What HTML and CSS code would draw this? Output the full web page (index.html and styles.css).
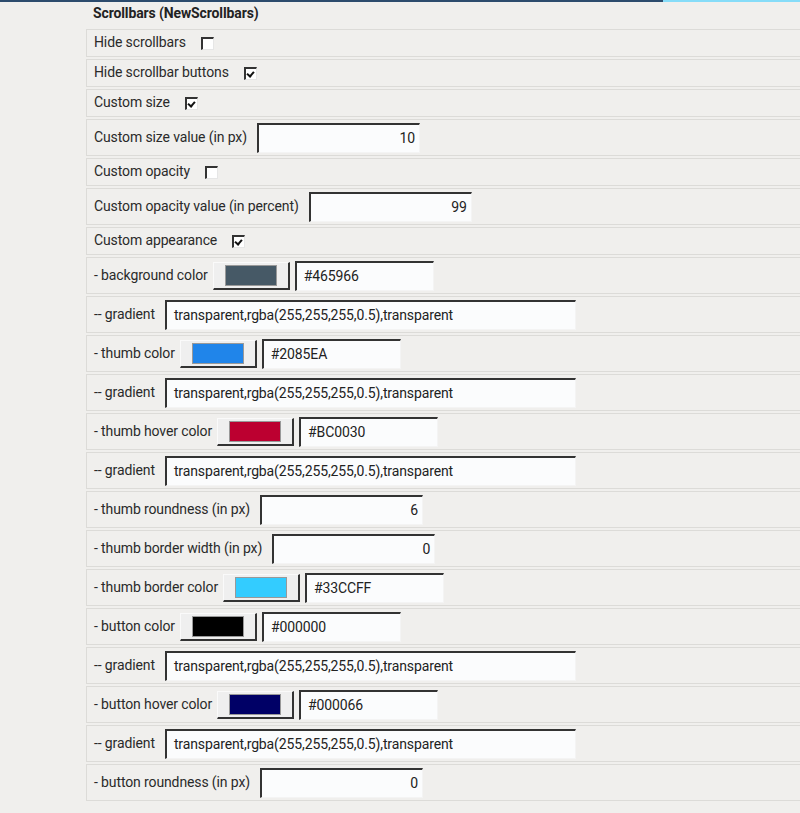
FILE: index.html
```html
<!DOCTYPE html>
<html>
<head>
<meta charset="utf-8">
<link rel="stylesheet" href="styles.css">
</head>
<body>
<div class="topbar"><div class="tb-dark"></div><div class="tb-light"></div></div>
<div class="panel">
  <div class="title">Scrollbars (NewScrollbars)</div>

  <div class="row short"><span class="lbl">Hide scrollbars</span><span class="cb"></span></div>
  <div class="row short"><span class="lbl">Hide scrollbar buttons</span><span class="cb on"></span></div>
  <div class="row short"><span class="lbl">Custom size</span><span class="cb on"></span></div>
  <div class="row"><span class="lbl">Custom size value (in px)</span><span class="inp num w163">10</span></div>
  <div class="row short"><span class="lbl">Custom opacity</span><span class="cb"></span></div>
  <div class="row"><span class="lbl">Custom opacity value (in percent)</span><span class="inp num w163">99</span></div>
  <div class="row short"><span class="lbl">Custom appearance</span><span class="cb on"></span></div>

  <div class="row"><span class="lbl">- background color</span><span class="cbtn"><span class="sw" style="background:#465966"></span></span><span class="inp w139">#465966</span></div>
  <div class="row"><span class="lbl">-- gradient</span><span class="inp grad">transparent,rgba(255,255,255,0.5),transparent</span></div>
  <div class="row"><span class="lbl">- thumb color</span><span class="cbtn"><span class="sw" style="background:#2085EA"></span></span><span class="inp w139">#2085EA</span></div>
  <div class="row"><span class="lbl">-- gradient</span><span class="inp grad">transparent,rgba(255,255,255,0.5),transparent</span></div>
  <div class="row"><span class="lbl">- thumb hover color</span><span class="cbtn"><span class="sw" style="background:#BC0030"></span></span><span class="inp w139">#BC0030</span></div>
  <div class="row"><span class="lbl">-- gradient</span><span class="inp grad">transparent,rgba(255,255,255,0.5),transparent</span></div>
  <div class="row"><span class="lbl">- thumb roundness (in px)</span><span class="inp num w163">6</span></div>
  <div class="row"><span class="lbl">- thumb border width (in px)</span><span class="inp num w163">0</span></div>
  <div class="row"><span class="lbl">- thumb border color</span><span class="cbtn"><span class="sw" style="background:#33CCFF"></span></span><span class="inp w139">#33CCFF</span></div>
  <div class="row"><span class="lbl">- button color</span><span class="cbtn"><span class="sw" style="background:#000000"></span></span><span class="inp w139">#000000</span></div>
  <div class="row"><span class="lbl">-- gradient</span><span class="inp grad">transparent,rgba(255,255,255,0.5),transparent</span></div>
  <div class="row"><span class="lbl">- button hover color</span><span class="cbtn"><span class="sw" style="background:#000066"></span></span><span class="inp w139">#000066</span></div>
  <div class="row"><span class="lbl">-- gradient</span><span class="inp grad">transparent,rgba(255,255,255,0.5),transparent</span></div>
  <div class="row"><span class="lbl">- button roundness (in px)</span><span class="inp num w163">0</span></div>
</div>
</body>
</html>
```
FILE: styles.css
```css
html, body {
  margin: 0;
  padding: 0;
  background: #f0efed;
  overflow: hidden;
}
body {
  font-family: Roboto, "Liberation Sans", sans-serif;
  font-size: 14px;
  letter-spacing: -0.12px;
  color: #2a2a2a;
  width: 800px;
  height: 813px;
}
.topbar {
  display: flex;
  height: 2px;
}
.tb-dark {
  width: 663px;
  background: #2c4b6d;
}
.tb-light {
  flex: 1;
  background: #86dcf8;
}
.panel {
  margin-left: 86px;
  width: 760px;
}
.title {
  font-weight: bold;
  height: 27px;
  line-height: 23px;
  padding-left: 7px;
  color: #222;
}
.row {
  display: flex;
  align-items: center;
  box-sizing: border-box;
  height: 37px;
  border: 1px solid #dcdbd8;
  padding-left: 7px;
  margin-bottom: 2px;
}
.row.short {
  height: 28px;
}
.lbl {
  margin-right: 10px;
  padding-bottom: 2px;
  white-space: nowrap;
}
.cb {
  box-sizing: border-box;
  width: 13px;
  height: 13px;
  margin-left: 5px;
  background: #fff;
  border-top: 2px solid #333;
  border-left: 2px solid #333;
  border-right: 1px solid #e6e6e6;
  border-bottom: 1px solid #e6e6e6;
  position: relative;
}
.cb.on::after {
  content: "";
  position: absolute;
  left: 2px;
  top: 1px;
  width: 3px;
  height: 5px;
  border-right: 2px solid #111;
  border-bottom: 2px solid #111;
  transform: rotate(40deg);
}
.inp {
  box-sizing: border-box;
  height: 30px;
  line-height: 26px;
  background: #fbfcfd;
  border-top: 2px solid #333;
  border-left: 2px solid #333;
  border-right: 1px solid #f4f4f4;
  border-bottom: 1px solid #f4f4f4;
  padding: 0 7px;
  color: #222;
  white-space: nowrap;
}
.num {
  text-align: right;
  padding-right: 4px;
}
.w163 { width: 163px; }
.w139 { width: 139px; }
.grad { width: 411px; }
.cbtn {
  box-sizing: border-box;
  width: 77px;
  height: 28px;
  margin-left: -5px;
  margin-right: 5px;
  background: #efefef;
  border-top: 1px solid #fafafa;
  border-left: 1px solid #fafafa;
  border-right: 2px solid #333;
  border-bottom: 2px solid #333;
  display: flex;
  align-items: center;
  justify-content: center;
}
.sw {
  display: block;
  box-sizing: border-box;
  width: 52px;
  height: 21px;
  border: 1px solid #999;
}
```
